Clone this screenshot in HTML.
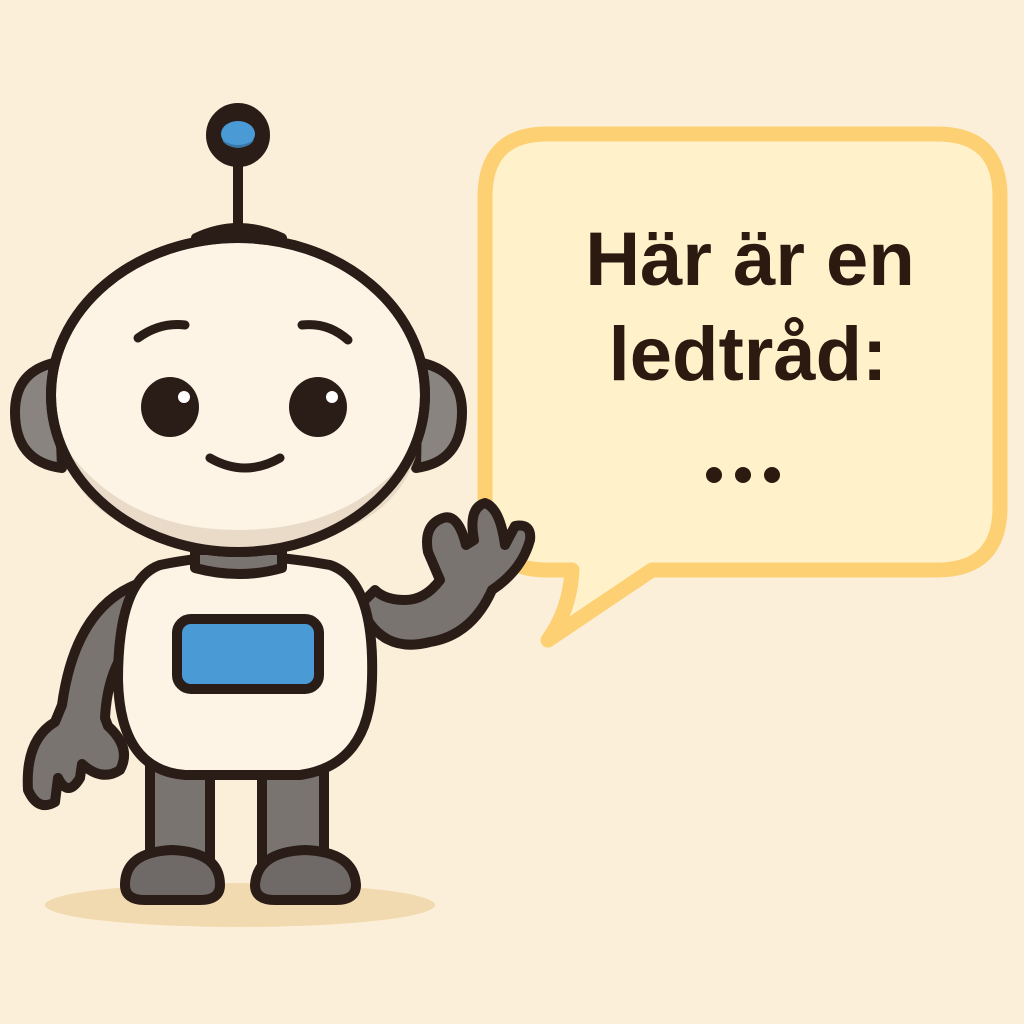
<!DOCTYPE html>
<html><head><meta charset="utf-8"><style>html,body{margin:0;padding:0;background:#fcefd9}svg{display:block}</style></head>
<body>
<svg width="1024" height="1024" viewBox="0 0 1024 1024" xmlns="http://www.w3.org/2000/svg">
<rect width="1024" height="1024" fill="#fcefd9"/>
<path d="M547,134 H937 Q1000,134 1000,197 V507 Q1000,570 937,570 H652 L548,640 Q570,610 572,570 H547 Q485,570 485,507 V197 Q485,134 547,134 Z" fill="#fff2cb" stroke="#fdd074" stroke-width="15" stroke-linejoin="round"/>
<g font-family="Liberation Sans, sans-serif" font-weight="bold" fill="#2b1a10" text-anchor="middle" font-size="76">
<text x="750" y="285">Här är en</text>
<text x="748" y="380">ledtråd:</text>
</g>
<circle cx="714" cy="475" r="8" fill="#2b1a10"/><circle cx="743" cy="475" r="8" fill="#2b1a10"/><circle cx="772" cy="475" r="8" fill="#2b1a10"/>
<ellipse cx="240" cy="905" rx="195" ry="22" fill="#f2dab0"/>
<g stroke="#2a1d18" stroke-width="10" stroke-linejoin="round" stroke-linecap="round">
<rect x="150" y="755" width="60" height="110" fill="#7a7470"/>
<rect x="262" y="755" width="62" height="110" fill="#7a7470"/>
<path d="M125,885 Q125,852 172,850 Q220,852 220,885 Q220,900 200,900 H145 Q125,900 125,885 Z" fill="#6f6a68"/>
<path d="M255,885 Q257,852 305,850 Q354,852 356,885 Q356,900 336,900 H275 Q255,900 255,885 Z" fill="#6f6a68"/>
<path d="M135,585 Q75,610 62,705 L55,722 Q25,740 28,790 Q38,812 55,802 L58,778 Q68,798 80,778 L82,764 Q102,782 120,770 Q132,748 108,726 L105,718 Q108,660 142,632 Z" fill="#7a7470"/>
<path d="M360,605 Q380,655 430,642 Q472,635 492,590 Q522,570 530,540 Q532,523 515,526 L505,545 Q500,508 485,503 Q468,508 474,540 L466,545 Q458,513 443,518 Q423,525 428,552 L440,580 Q425,600 405,600 Q385,600 375,590 Z" fill="#7a7470"/>
<path d="M160,565 Q240,548 330,565 Q375,580 372,680 Q370,765 300,775 H185 Q120,770 118,680 Q118,580 160,565 Z" fill="#fdf4e6"/>
<path d="M195,550 H282 V568 Q240,580 195,568 Z" fill="#7a7470"/>
<rect x="177" y="619" width="142" height="70" rx="14" fill="#4a9ad6"/>
<path d="M58,362 Q15,370 15,412 Q15,462 62,468 Z" fill="#8a8480"/>
<path d="M418,362 Q462,370 462,412 Q462,462 416,468 Z" fill="#8a8480"/>
<line x1="238" y1="160" x2="238" y2="226"/>
<circle cx="238" cy="135" r="27" fill="#2a1d18"/>
<path d="M196,238 Q238,218 282,238 Z" fill="#2a1d18"/>
<ellipse cx="238" cy="395" rx="187" ry="157" fill="#fdf4e6"/>
</g>
<ellipse cx="238" cy="134" rx="17" ry="13" fill="#4a9ad6"/>
<path d="M222,140 Q238,150 254,140 Q250,147 238,148 Q226,147 222,140Z" fill="#3a78a8"/>
<path d="M60,440 Q120,530 238,530 Q360,530 420,440 Q400,545 238,548 Q80,545 60,440 Z" fill="#e3d5c0" opacity="0.8"/>
<ellipse cx="238" cy="395" rx="187" ry="157" fill="none" stroke="#2a1d18" stroke-width="10"/>
<g fill="#2a1d18">
<ellipse cx="170" cy="407" rx="29" ry="30"/><ellipse cx="318" cy="407" rx="29" ry="30"/>
</g>
<circle cx="184" cy="397" r="6" fill="#fff"/><circle cx="332" cy="397" r="6" fill="#fff"/>
<g stroke="#2a1d18" stroke-width="9" stroke-linecap="round" fill="none">
<path d="M138,338 Q160,322 185,325"/>
<path d="M302,325 Q328,322 348,340"/>
<path d="M210,458 Q245,478 280,458"/>
</g>
</svg>
</body></html>
